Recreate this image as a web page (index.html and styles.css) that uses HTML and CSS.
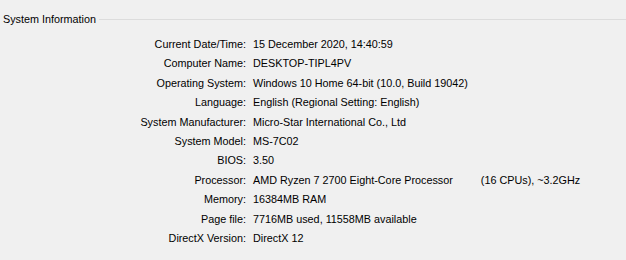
FILE: index.html
```html
<!DOCTYPE html>
<html lang="en">
<head>
    <meta charset="UTF-8">
    <title>System Information</title>
    <link rel="stylesheet" href="styles.css">
</head>
<body>
    <div class="group">
        <div class="group-title"><span>System Information</span><div class="rule"></div></div>
        <div class="info">
            <div class="label">Current Date/Time:</div><div class="value">15 December 2020, 14:40:59</div>
            <div class="label">Computer Name:</div><div class="value">DESKTOP-TIPL4PV</div>
            <div class="label">Operating System:</div><div class="value">Windows 10 Home 64-bit (10.0, Build 19042)</div>
            <div class="label">Language:</div><div class="value">English (Regional Setting: English)</div>
            <div class="label">System Manufacturer:</div><div class="value">Micro-Star International Co., Ltd</div>
            <div class="label">System Model:</div><div class="value">MS-7C02</div>
            <div class="label">BIOS:</div><div class="value">3.50</div>
            <div class="label">Processor:</div><div class="value">AMD Ryzen 7 2700 Eight-Core Processor<span class="cpus">(16 CPUs), ~3.2GHz</span></div>
            <div class="label">Memory:</div><div class="value">16384MB RAM</div>
            <div class="label">Page file:</div><div class="value">7716MB used, 11558MB available</div>
            <div class="label">DirectX Version:</div><div class="value">DirectX 12</div>
        </div>
    </div>
</body>
</html>
```

FILE: styles.css
```css
body { margin: 0; background: #f0f0f0; color: #000; font-family: "Liberation Sans", Arial, sans-serif; font-size: 10.8px; }

.group { width: 626px; height: 260px; }
.group-title { display: flex; align-items: center; padding: 12px 0 0 3px; line-height: 14px; }
.group-title .rule { flex: 1; height: 1px; background: #dcdcdc; margin-left: 3px; }

.info { display: grid; grid-template-columns: 246px auto; column-gap: 7px; margin-top: 9px; line-height: 19.4px; }
.info .label { text-align: right; white-space: nowrap; }
.info .value { white-space: nowrap; }
.info .cpus { margin-left: 28px; }
```
